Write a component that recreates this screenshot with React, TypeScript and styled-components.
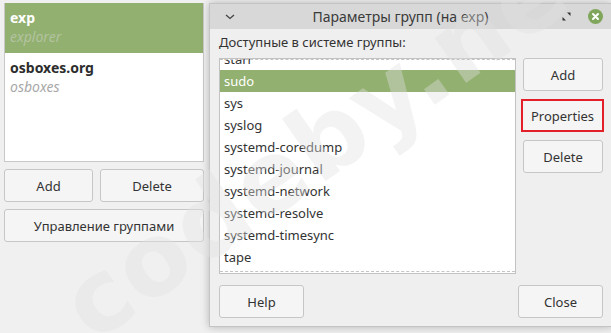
import React from 'react'
import styled, {createGlobalStyle} from 'styled-components'

const GlobalStyle = createGlobalStyle`
  html, body {
    margin: 0;
    padding: 0;
    background: #f0f0f0;
  }
  body {
    font-family: "Noto Sans", "Open Sans", sans-serif;
    font-size: 13px;
    color: #3c3c3c;
  }
`

const Desktop = styled.div`
  position: relative;
  width: 611px;
  height: 333px;
  overflow: hidden;
  background: #f0f0f0;
`

const MainWindow = styled.div`
  display: flex;
  flex-direction: column;
  gap: 7px;
  width: 200px;
  padding: 3px 0 0 4px;
`

const UserList = styled.div`
  height: 158px;
  background: #fff;
  border: 1px solid #c8c8c8;
  border-top: none;
`

const UserRow = styled.div<{selected?: boolean}>`
  display: flex;
  flex-direction: column;
  padding: 5px 5px 2px;
  height: 43px;
  background: ${p => (p.selected ? '#92b06f' : 'transparent')};
`

const UserLogin = styled.span<{selected?: boolean}>`
  font-weight: 700;
  font-size: 14px;
  line-height: 19px;
  color: ${p => (p.selected ? '#fff' : '#2d2d2d')};
`

const UserName = styled.span<{selected?: boolean}>`
  font-style: italic;
  font-size: 14px;
  line-height: 19px;
  color: ${p => (p.selected ? '#b3c3a1' : '#a8a8a8')};
`

const ButtonRow = styled.div`
  display: grid;
  grid-template-columns: 89px 104px;
  gap: 7px;
`

const Button = styled.button<{w?: number; highlight?: boolean}>`
  height: 33px;
  width: ${p => (p.w ? `${p.w}px` : 'auto')};
  padding: 0;
  border: 1px solid #c6c6c6;
  border-radius: 3px;
  background: #f5f5f5;
  font-family: inherit;
  font-size: 13px;
  color: #333;
  box-sizing: border-box;
  ${p =>
    p.highlight &&
    `
    border: 2px solid #e3202a;
    border-radius: 0;
    margin: 0 -1px 0 -2px;
    width: ${(p.w ?? 80) + 3}px;
  `}
`

const Dialog = styled.div`
  position: absolute;
  left: 209px;
  top: 3px;
  width: 403px;
  height: 324px;
  display: flex;
  flex-direction: column;
  background: #efefef;
  border: 1px solid #c4c4c4;
  box-sizing: border-box;
  box-shadow: 0 0 8px rgba(0, 0, 0, 0.25);
`

const TitleBar = styled.div`
  height: 25px;
  flex: none;
  display: flex;
  align-items: center;
  background: #d8d8d8;
  padding: 0 8px 0 15px;
`

const TitleText = styled.div`
  flex: 1;
  text-align: center;
  font-size: 14px;
  color: #3a3a3a;
  padding-left: 4px;
`

const TitleIcons = styled.div`
  display: flex;
  align-items: center;
  gap: 17px;
`

const Body = styled.div`
  flex: 1;
  display: flex;
  flex-direction: column;
  padding: 2px 8px 8px 9px;
`

const Label = styled.div`
  height: 27px;
  line-height: 22px;
  font-size: 13px;
  color: #333;
`

const Middle = styled.div`
  display: flex;
  gap: 6px;
`

const GroupList = styled.div`
  position: relative;
  width: 298px;
  height: 216px;
  box-sizing: border-box;
  background: #fff;
  border: 1px solid #c2c2c2;
  overflow: hidden;
  &::before,
  &::after {
    content: '';
    position: absolute;
    left: 0;
    right: 0;
    border-top: 1px dashed #c4c4c4;
    z-index: 1;
  }
  &::before {
    top: 0;
  }
  &::after {
    bottom: 1px;
  }
`

const GroupRows = styled.div`
  margin-top: -11px;
`

const GroupRow = styled.div<{selected?: boolean}>`
  height: 22px;
  line-height: 22px;
  padding-left: 4px;
  font-size: 13px;
  color: ${p => (p.selected ? '#fff' : '#333')};
  background: ${p => (p.selected ? '#92b06f' : 'transparent')};
`

const SideButtons = styled.div`
  display: flex;
  flex-direction: column;
  gap: 8px;
  padding-left: 1px;
`

const Footer = styled.div`
  margin-top: auto;
  display: flex;
  justify-content: space-between;
`

const Watermark = styled.div`
  position: absolute;
  left: 45px;
  top: 275px;
  transform: rotate(-35deg);
  transform-origin: left top;
  font-family: "DejaVu Sans", sans-serif;
  font-weight: 700;
  font-size: 100px;
  line-height: 100px;
  letter-spacing: 2px;
  color: rgba(225, 225, 225, 0.4);
  pointer-events: none;
  white-space: nowrap;
`

const groups = [
  'starr',
  'sudo',
  'sys',
  'syslog',
  'systemd-coredump',
  'systemd-journal',
  'systemd-network',
  'systemd-resolve',
  'systemd-timesync',
  'tape',
]

function Chevron() {
  return (
    <svg width="10" height="6" viewBox="0 0 10 6">
      <path d="M1 1 L5 4.5 L9 1" fill="none" stroke="#444" strokeWidth="1.3" />
    </svg>
  )
}

function MaximizeIcon() {
  return (
    <svg width="9" height="9" viewBox="0 0 9 9">
      <path d="M0.5 8.5 L0.5 5 L4 8.5 Z" fill="#333" />
      <path d="M8.5 0.5 L8.5 4 L5 0.5 Z" fill="#333" />
    </svg>
  )
}

function CloseIcon() {
  return (
    <svg width="15" height="15" viewBox="0 0 15 15">
      <circle cx="7.5" cy="7.5" r="7.5" fill="#80a65c" />
      <path d="M5 5 L10 10 M10 5 L5 10" stroke="#fff" strokeWidth="2" strokeLinecap="round" />
    </svg>
  )
}

export default function App() {
  return (
    <>
      <GlobalStyle />
      <Desktop>
        <MainWindow>
          <UserList>
            <UserRow selected>
              <UserLogin selected>exp</UserLogin>
              <UserName selected>explorer</UserName>
            </UserRow>
            <UserRow>
              <UserLogin>osboxes.org</UserLogin>
              <UserName>osboxes</UserName>
            </UserRow>
          </UserList>
          <ButtonRow>
            <Button>Add</Button>
            <Button>Delete</Button>
          </ButtonRow>
          <Button>Управление группами</Button>
        </MainWindow>

        <Dialog>
          <TitleBar>
            <Chevron />
            <TitleText>Параметры групп (на exp)</TitleText>
            <TitleIcons>
              <MaximizeIcon />
              <CloseIcon />
            </TitleIcons>
          </TitleBar>
          <Body>
            <Label>Доступные в системе группы:</Label>
            <Middle>
              <GroupList>
                <GroupRows>
                  {groups.map(g => (
                    <GroupRow key={g} selected={g === 'sudo'}>
                      {g}
                    </GroupRow>
                  ))}
                </GroupRows>
              </GroupList>
              <SideButtons>
                <Button w={80}>Add</Button>
                <Button w={80} highlight>
                  Properties
                </Button>
                <Button w={80}>Delete</Button>
              </SideButtons>
            </Middle>
            <Footer>
              <Button w={85}>Help</Button>
              <Button w={85}>Close</Button>
            </Footer>
          </Body>
        </Dialog>

        <Watermark>codeby.net</Watermark>
      </Desktop>
    </>
  )
}
